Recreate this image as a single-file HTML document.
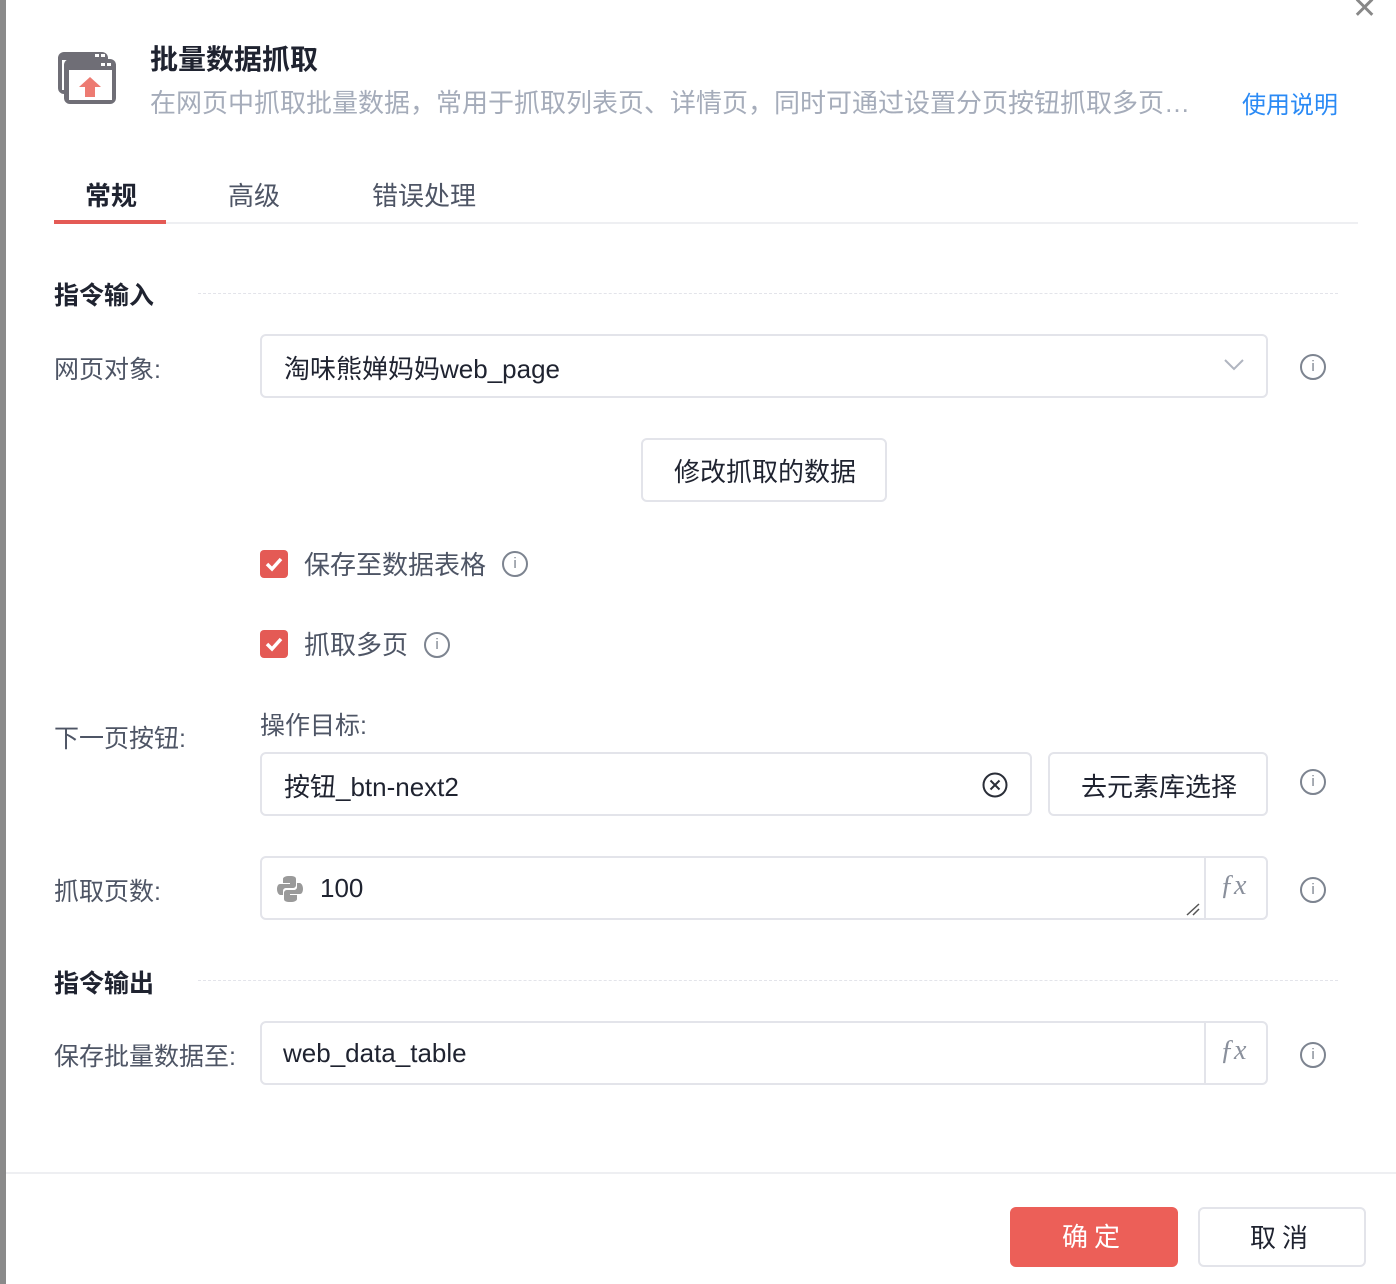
<!DOCTYPE html>
<html><head><meta charset="utf-8"><style>
*{box-sizing:border-box;margin:0;padding:0}
body{width:1396px;height:1284px;background:#fff;position:relative;overflow:hidden;font-family:"Liberation Sans","Noto Sans CJK SC",sans-serif;color:#4a5060}
.a{position:absolute}
.strip{left:0;top:0;width:6px;height:1284px;background:#8a8a8a}
.lbl{font-size:24px;color:#4e5565}
.box{border:2px solid #e3e4ea;border-radius:6px;background:#fff}
.info{width:26px;height:26px;border:2px solid #7d8490;border-radius:50%;font-size:15px;color:#7d8490;text-align:center;line-height:22px;font-family:"Liberation Sans",sans-serif}
.sec{font-size:24px;font-weight:bold;color:#1f2330}
.dash{border-top:1px dashed #e3e4ea;height:0}
.cb{width:28px;height:28px;background:#e45a55;border-radius:4px}
.fx{font-family:"Liberation Serif",serif;font-style:italic;font-size:28px;color:#8a909c}
</style></head><body>
<div class="a strip"></div>
<div class="a" style="left:1352px;top:-2px;font-size:30px;color:#888;line-height:22px">✕</div>
<svg class="a" style="left:56px;top:50px" width="62" height="56" viewBox="0 0 62 56">
<rect x="2" y="2" width="50" height="42" rx="6" fill="#6f6e76"/>
<rect x="6" y="10" width="42" height="30" fill="#fff"/>
<rect x="8" y="9" width="52" height="45" rx="6" fill="#6f6e76"/>
<rect x="13" y="20" width="43" height="30" fill="#fff"/>
<rect x="39" y="4" width="4" height="3" fill="#fff"/><rect x="45" y="4" width="4" height="3" fill="#fff"/>
<rect x="45" y="13" width="4" height="3" fill="#fff"/><rect x="51" y="13" width="4" height="3" fill="#fff"/>
<path d="M34 27 L45 37 H39 V47 H29 V37 H23 Z" fill="#ed7b72"/>
</svg>
<div class="a" style="left:150px;top:38px;font-size:28px;font-weight:bold;color:#1f2330">批量数据抓取</div>
<div class="a" style="left:150px;top:83px;font-size:26px;color:#a5acba">在网页中抓取批量数据，常用于抓取列表页、详情页，同时可通过设置分页按钮抓取多页…</div>
<div class="a" style="left:1242px;top:85px;font-size:24px;color:#2a8af5">使用说明</div>
<div class="a" style="left:54px;top:222px;width:1304px;height:2px;background:#eeeff2"></div>
<div class="a" style="left:54px;top:220px;width:112px;height:4px;background:#e45a55"></div>
<div class="a" style="left:85px;top:176px;font-size:26px;font-weight:bold;color:#1f2330">常规</div>
<div class="a" style="left:228px;top:176px;font-size:26px;color:#4e5565">高级</div>
<div class="a" style="left:372px;top:176px;font-size:26px;color:#4e5565">错误处理</div>

<div class="a sec" style="left:54px;top:276px;font-size:25px">指令输入</div>
<div class="a dash" style="left:198px;top:293px;width:1140px"></div>
<div class="a lbl" style="left:54px;top:350px;font-size:25px">网页对象:</div>
<div class="a box" style="left:260px;top:334px;width:1008px;height:64px"></div>
<div class="a" style="left:284px;top:349px;font-size:26px;color:#1f2330">淘味熊婵妈妈web_page</div>
<svg class="a" style="left:1223px;top:358px" width="22" height="14"><path d="M2 2 L11 11 L20 2" fill="none" stroke="#b0b5c0" stroke-width="2"/></svg>
<div class="a info" style="left:1300px;top:354px">i</div>
<div class="a box" style="left:641px;top:438px;width:246px;height:64px"></div>
<div class="a" style="left:674px;top:452px;font-size:26px;color:#1f2330">修改抓取的数据</div>

<div class="a cb" style="left:260px;top:550px"></div>
<svg class="a" style="left:260px;top:550px" width="28" height="28"><path d="M7 14 L12 19 L21 9" fill="none" stroke="#fff" stroke-width="3.5"/></svg>
<div class="a lbl" style="left:304px;top:545px;font-size:26px">保存至数据表格</div>
<div class="a info" style="left:502px;top:551px">i</div>
<div class="a cb" style="left:260px;top:630px"></div>
<svg class="a" style="left:260px;top:630px" width="28" height="28"><path d="M7 14 L12 19 L21 9" fill="none" stroke="#fff" stroke-width="3.5"/></svg>
<div class="a lbl" style="left:304px;top:625px;font-size:26px">抓取多页</div>
<div class="a info" style="left:424px;top:632px">i</div>

<div class="a lbl" style="left:54px;top:719px;font-size:25px">下一页按钮:</div>
<div class="a lbl" style="left:260px;top:706px;font-size:25px">操作目标:</div>
<div class="a box" style="left:260px;top:752px;width:772px;height:64px"></div>
<div class="a" style="left:284px;top:767px;font-size:26px;color:#1f2330">按钮_btn-next2</div>
<svg class="a" style="left:981px;top:771px" width="28" height="28"><circle cx="14" cy="14" r="11.5" fill="none" stroke="#2a2e38" stroke-width="2"/><path d="M9.5 9.5 L18.5 18.5 M18.5 9.5 L9.5 18.5" stroke="#2a2e38" stroke-width="2"/></svg>
<div class="a box" style="left:1048px;top:752px;width:220px;height:64px"></div>
<div class="a" style="left:1081px;top:767px;font-size:26px;color:#1f2330">去元素库选择</div>
<div class="a info" style="left:1300px;top:769px">i</div>

<div class="a lbl" style="left:54px;top:872px;font-size:25px">抓取页数:</div>
<div class="a box" style="left:260px;top:856px;width:1008px;height:64px"></div>
<div class="a" style="left:1204px;top:858px;width:2px;height:60px;background:#e3e4ea"></div>
<svg class="a" style="left:276px;top:875px" width="28" height="28" viewBox="0 0 28 28"><path d="M13 1 C7 1 7 4 7 4 V8 H14 V9 H4 C1 9 1 14 1 14 C1 19 4 20 4 20 H7 V16 C7 13 10 13 10 13 H17 C20 13 20 10 20 10 V4 C20 1 16 1 13 1Z" fill="#9a9a9a"/><path d="M15 27 C21 27 21 24 21 24 V20 H14 V19 H24 C27 19 27 14 27 14 C27 9 24 8 24 8 H21 V12 C21 15 18 15 18 15 H11 C8 15 8 18 8 18 V24 C8 27 12 27 15 27Z" fill="#9a9a9a"/></svg>
<div class="a" style="left:320px;top:873px;font-size:26px;color:#1f2330">100</div>
<svg class="a" style="left:1185px;top:902px" width="16" height="14"><path d="M2 13 L14 2 M8 13 L14 7" stroke="#555" stroke-width="1.5"/></svg>
<div class="a fx" style="left:1220px;top:870px">ƒx</div>
<div class="a info" style="left:1300px;top:877px">i</div>

<div class="a sec" style="left:54px;top:964px;font-size:25px">指令输出</div>
<div class="a dash" style="left:198px;top:980px;width:1140px"></div>
<div class="a lbl" style="left:54px;top:1037px;font-size:25px">保存批量数据至:</div>
<div class="a box" style="left:260px;top:1021px;width:1008px;height:64px"></div>
<div class="a" style="left:1204px;top:1023px;width:2px;height:60px;background:#e3e4ea"></div>
<div class="a" style="left:283px;top:1038px;font-size:26px;color:#1f2330">web_data_table</div>
<div class="a fx" style="left:1220px;top:1035px">ƒx</div>
<div class="a info" style="left:1300px;top:1042px">i</div>

<div class="a" style="left:6px;top:1172px;width:1390px;height:2px;background:#eeeff2"></div>
<div class="a" style="left:1010px;top:1207px;width:168px;height:60px;background:#ec5f58;border-radius:6px;color:#fff;font-size:26px;text-align:center;line-height:60px;letter-spacing:6px">确定</div>
<div class="a box" style="left:1198px;top:1207px;width:168px;height:60px;color:#1f2330;font-size:26px;text-align:center;line-height:58px;letter-spacing:6px">取消</div>
</body></html>
